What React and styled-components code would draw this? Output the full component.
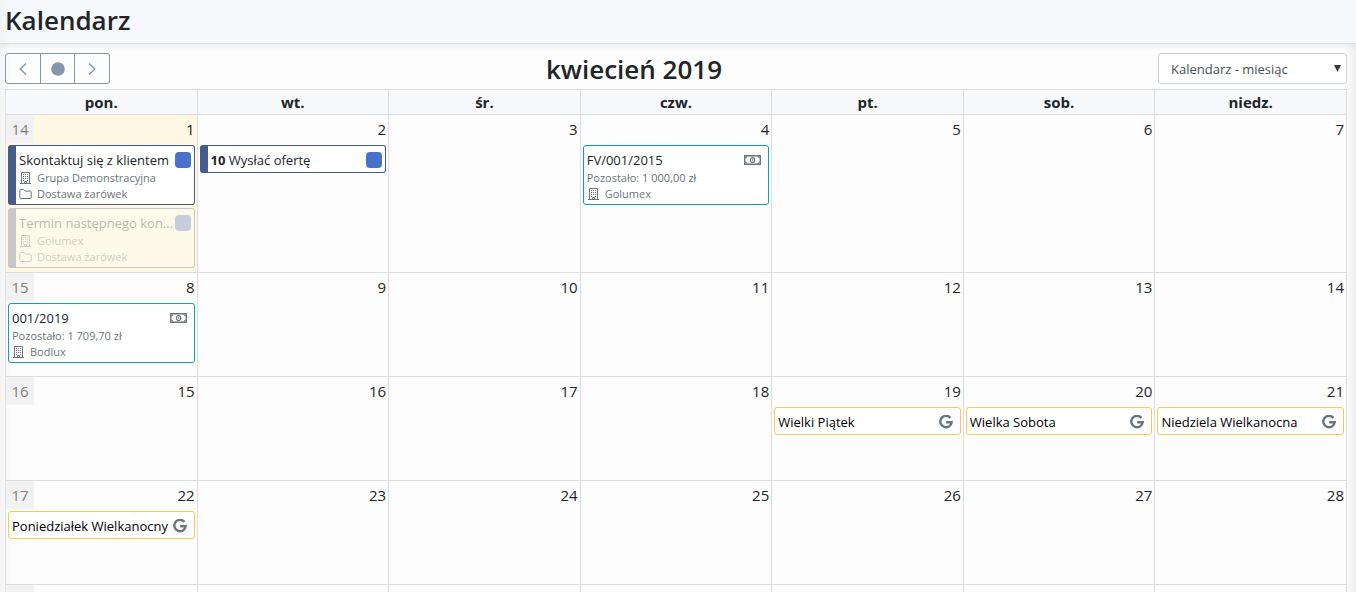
import React from "react";
import styled, { createGlobalStyle, css } from "styled-components";

const GlobalStyle = createGlobalStyle`
  *,
  *::before,
  *::after {
    box-sizing: border-box;
  }
  body {
    margin: 0;
    background: #fdfdfd;
    color: #212529;
    font-family: "Open Sans", "Noto Sans", sans-serif;
    font-size: 15px;
    line-height: 24px;
  }
`;

const Page = styled.div`
  height: 100vh;
  overflow: hidden;
  background: linear-gradient(to right, #f3f3f3, rgba(243, 243, 243, 0) 10px),
    linear-gradient(to left, #eeeeee, rgba(243, 243, 243, 0) 10px), #fdfdfd;
`;

const Header = styled.header`
  height: 44px;
  padding: 4px 5px;
  border-bottom: 1px solid #dee2e6;
  background: linear-gradient(to right, #f0f2f4, rgba(248, 249, 252, 0) 10px),
    #f8f9fc;
  box-shadow: 0 2px 6px rgba(0, 0, 0, 0.08);
`;

const PageTitle = styled.h1`
  margin: 0;
  font-size: 26px;
  font-weight: 600;
  line-height: 32px;
`;

const Main = styled.main`
  padding: 9px 9px 0 5px;
`;

const Toolbar = styled.div`
  display: flex;
  align-items: flex-start;
  justify-content: space-between;
  height: 36px;
`;

const MonthTitle = styled.h2`
  margin: 0;
  font-size: 26px;
  font-weight: 600;
  line-height: 32px;
`;

const ButtonGroup = styled.div`
  display: flex;
`;

const NavButton = styled.button`
  display: flex;
  align-items: center;
  justify-content: center;
  width: 36px;
  height: 31px;
  padding: 0;
  border: 1px solid #8496a9;
  background: transparent;
  color: #8496a9;
  cursor: pointer;

  & + & {
    width: 35px;
    margin-left: -1px;
  }
  &:first-child {
    border-radius: 3px 0 0 3px;
  }
  &:last-child {
    width: 36px;
    border-radius: 0 3px 3px 0;
  }
`;

const ViewPicker = styled.div`
  display: grid;
  align-items: center;
  width: 189px;

  & > * {
    grid-area: 1 / 1;
  }
`;

const ViewSelect = styled.select`
  appearance: none;
  width: 100%;
  height: 31px;
  padding: 0 24px 0 12px;
  border: 1px solid #ced4da;
  border-radius: 3px;
  background: #fff;
  color: #495057;
  font: inherit;
  font-size: 13px;
`;

const SelectArrow = styled.svg`
  justify-self: end;
  margin-right: 6px;
  pointer-events: none;
`;

const Month = styled.table`
  width: 100%;
  table-layout: fixed;
  border-collapse: separate;
  border-spacing: 0;
  border-top: 1px solid #dddddd;
  border-left: 1px solid #dddddd;
`;

const WeekDay = styled.th`
  height: 25px;
  padding: 0;
  border-right: 1px solid #dddddd;
  border-bottom: 1px solid #dddddd;
  background: #f8f9fc;
  font-size: 15px;
  font-weight: 700;
  line-height: 24px;
`;

const DayCell = styled.td`
  height: 104px;
  padding: 0;
  border-right: 1px solid #dddddd;
  border-bottom: 1px solid #dddddd;
  background: ${({ $today }) => ($today ? "#fdf7e3" : "transparent")};
  vertical-align: top;
`;

const DayTop = styled.div`
  display: flex;
  justify-content: space-between;
  height: 28px;
  line-height: 29px;
`;

const WeekNumber = styled.span`
  width: 28px;
  background: #f2f2f2;
  color: #808080;
  text-align: center;
`;

const DayNumber = styled.span`
  margin-left: auto;
  padding-right: 2px;
`;

const EventList = styled.ul`
  display: grid;
  grid-template-columns: minmax(0, 1fr);
  gap: 3px;
  margin: 0;
  padding: 2px 2px 4px;
  list-style: none;
`;

const kinds = {
  task: css`
    border-color: #465a8c;
    border-left-width: 8px;
  `,
  done: css`
    border-color: #c7c8c6;
    border-left-width: 8px;
    background: #fefae9;
    color: #bcbbb0;
  `,
  invoice: css`
    border-color: #0fa3a3;
  `,
  google: css`
    border-color: #ffc84f;
    color: #000;
  `,
};

const EventCard = styled.li`
  padding: 4px 3px 2px;
  border: 1px solid;
  border-radius: 3px;
  background: #fff;
  ${({ $kind }) => kinds[$kind]}
`;

const EventHead = styled.div`
  display: flex;
  align-items: center;
  gap: 1px;
  height: 20px;
`;

const EventTitle = styled.span`
  flex: 1;
  min-width: 0;
  overflow: hidden;
  font-size: 13px;
  line-height: 20px;
  text-overflow: ellipsis;
  white-space: nowrap;
`;

const EventLine = styled.div`
  display: flex;
  align-items: center;
  gap: 5px;
  height: 16px;
  color: ${({ $faded }) => ($faded ? "#d0cfc5" : "#6c757d")};
  font-size: 11px;
  line-height: 16px;
`;

const Swatch = styled.span`
  width: 16px;
  height: 16px;
  border-radius: 4px;
  background: ${({ $faded }) => ($faded ? "#c7cedb" : "#4b72cb")};
`;

const Badge = styled.span`
  display: flex;
  padding-right: 4px;
  color: #6c757d;
`;

const BuildingIcon = () => (
  <svg width="13" height="12" viewBox="0 0 13 12" fill="none" stroke="currentColor">
    <path d="M2.5 11.5V.5h8v11M1 11.5h11" />
    <path d="M4 2.5h1m1 0h1m1 0h1M4 4.5h1m1 0h1m1 0h1M4 6.5h1m1 0h1m1 0h1M4 8.5h1m3 0h1" />
    <path d="M5.5 11V9.5h2V11" />
  </svg>
);

const FolderIcon = () => (
  <svg width="13" height="12" viewBox="0 0 13 12" fill="none" stroke="currentColor">
    <path
      d="M.8 9.6V2.4q0-.9.9-.9h3l1.4 1.6h5.2q.9 0 .9.9v5.6q0 .9-.9.9H1.7q-.9 0-.9-.9z"
      strokeLinejoin="round"
    />
  </svg>
);

const MoneyIcon = () => (
  <svg width="17" height="10" viewBox="0 0 17 10" fill="none" stroke="currentColor">
    <path d="M.7.8h15.6v8.4H.7z" strokeWidth="1.4" />
    <path d="M1 3q2 0 2-2M1 7q2 0 2 2M16 3q-2 0-2-2M16 7q-2 0-2 2" />
    <ellipse cx="8.5" cy="5" rx="2.1" ry="2.5" strokeWidth="1.2" />
    <path d="M7.8 4.2l.9-.5v2.6" strokeWidth=".8" />
  </svg>
);

const GoogleIcon = () => (
  <svg width="14" height="14" viewBox="0 0 14 14" fill="none" stroke="currentColor">
    <path d="M11.4 2.9A5.7 5.7 0 1 0 12.7 7.2H7.2" strokeWidth="2.4" />
  </svg>
);

const weekDays = ["pon.", "wt.", "śr.", "czw.", "pt.", "sob.", "niedz."];

const weeks = [
  { number: 14, days: [1, 2, 3, 4, 5, 6, 7] },
  { number: 15, days: [8, 9, 10, 11, 12, 13, 14] },
  { number: 16, days: [15, 16, 17, 18, 19, 20, 21] },
  { number: 17, days: [22, 23, 24, 25, 26, 27, 28] },
];

const events = [
  {
    id: 1,
    day: 1,
    kind: "task",
    title: "Skontaktuj się z klientem",
    company: "Grupa Demonstracyjna",
    project: "Dostawa żarówek",
  },
  {
    id: 2,
    day: 1,
    kind: "done",
    title: "Termin następnego kon...",
    company: "Golumex",
    project: "Dostawa żarówek",
  },
  { id: 3, day: 2, kind: "task", hour: "10", title: "Wysłać ofertę" },
  {
    id: 4,
    day: 4,
    kind: "invoice",
    title: "FV/001/2015",
    left: "Pozostało: 1 000,00 zł",
    company: "Golumex",
  },
  {
    id: 5,
    day: 8,
    kind: "invoice",
    title: "001/2019",
    left: "Pozostało: 1 709,70 zł",
    company: "Bodlux",
  },
  { id: 6, day: 19, kind: "google", title: "Wielki Piątek" },
  { id: 7, day: 20, kind: "google", title: "Wielka Sobota" },
  { id: 8, day: 21, kind: "google", title: "Niedziela Wielkanocna" },
  { id: 9, day: 22, kind: "google", title: "Poniedziałek Wielkanocny" },
];

const CalendarEvent = ({ event }) => {
  const faded = event.kind === "done";
  return (
    <EventCard $kind={event.kind}>
      <EventHead>
        <EventTitle>
          {event.hour && <b>{event.hour} </b>}
          {event.title}
        </EventTitle>
        {event.kind === "invoice" && (
          <Badge>
            <MoneyIcon />
          </Badge>
        )}
        {event.kind === "google" && (
          <Badge>
            <GoogleIcon />
          </Badge>
        )}
        {(event.kind === "task" || faded) && <Swatch $faded={faded} />}
      </EventHead>
      {event.left && <EventLine>{event.left}</EventLine>}
      {event.company && (
        <EventLine $faded={faded}>
          <BuildingIcon />
          {event.company}
        </EventLine>
      )}
      {event.project && (
        <EventLine $faded={faded}>
          <FolderIcon />
          {event.project}
        </EventLine>
      )}
    </EventCard>
  );
};

const MonthTable = () => (
  <Month>
    <thead>
      <tr>
        {weekDays.map((name) => (
          <WeekDay key={name} scope="col">
            {name}
          </WeekDay>
        ))}
      </tr>
    </thead>
    <tbody>
      {weeks.map((week) => (
        <tr key={week.number}>
          {week.days.map((day, index) => {
            const dayEvents = events.filter((event) => event.day === day);
            return (
              <DayCell key={day} $today={day === 1}>
                <DayTop>
                  {index === 0 && <WeekNumber>{week.number}</WeekNumber>}
                  <DayNumber>{day}</DayNumber>
                </DayTop>
                {dayEvents.length > 0 && (
                  <EventList>
                    {dayEvents.map((event) => (
                      <CalendarEvent key={event.id} event={event} />
                    ))}
                  </EventList>
                )}
              </DayCell>
            );
          })}
        </tr>
      ))}
      <tr>
        {weekDays.map((name, index) => (
          <DayCell key={name}>
            <DayTop>{index === 0 && <WeekNumber />}</DayTop>
          </DayCell>
        ))}
      </tr>
    </tbody>
  </Month>
);

const App = () => (
  <>
    <GlobalStyle />
    <Page>
      <Header>
        <PageTitle>Kalendarz</PageTitle>
      </Header>
      <Main>
        <Toolbar>
          <ButtonGroup>
            <NavButton type="button" aria-label="Poprzedni miesiąc">
              <svg width="8" height="12" viewBox="0 0 8 12" fill="none" stroke="currentColor">
                <path d="M7 .5L1.2 6 7 11.5" strokeWidth="1.4" />
              </svg>
            </NavButton>
            <NavButton type="button" aria-label="Dzisiaj">
              <svg width="14" height="14" viewBox="0 0 14 14" fill="currentColor">
                <circle cx="7" cy="7" r="6.8" />
              </svg>
            </NavButton>
            <NavButton type="button" aria-label="Następny miesiąc">
              <svg width="8" height="12" viewBox="0 0 8 12" fill="none" stroke="currentColor">
                <path d="M1 .5L6.8 6 1 11.5" strokeWidth="1.4" />
              </svg>
            </NavButton>
          </ButtonGroup>
          <MonthTitle>kwiecień 2019</MonthTitle>
          <ViewPicker>
            <ViewSelect aria-label="Widok" defaultValue="month">
              <option value="month">Kalendarz - miesiąc</option>
            </ViewSelect>
            <SelectArrow width="7" height="7" viewBox="0 0 7 7" fill="#343a40">
              <path d="M0 0h7L3.5 7z" />
            </SelectArrow>
          </ViewPicker>
        </Toolbar>
        <MonthTable />
      </Main>
    </Page>
  </>
);

export default App;
